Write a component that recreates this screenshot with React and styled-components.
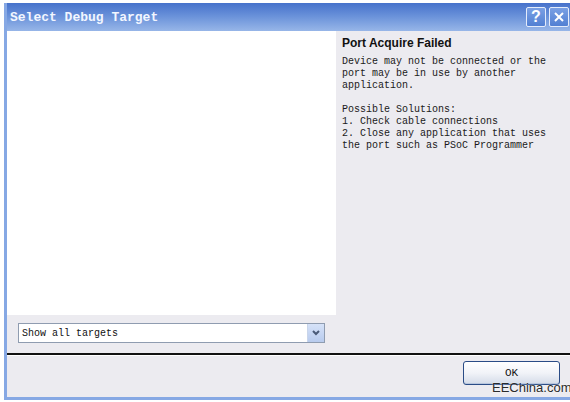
import styled, { createGlobalStyle } from "styled-components";

const Global = createGlobalStyle`
  html, body {
    margin: 0;
    background: #ffffff;
    overflow: hidden;
  }
`;

const Window = styled.div`
  position: relative;
  box-sizing: border-box;
  margin: 3px 0 0 4px;
  width: 566px;
  height: 397px;
  display: flex;
  flex-direction: column;
  border-left: 3px solid #86a8e4;
  border-bottom: 3px solid #86a8e4;
`;

const TitleBar = styled.div`
  height: 28px;
  flex-shrink: 0;
  display: flex;
  align-items: center;
  justify-content: space-between;
  padding: 0 1px 0 3px;
  background: linear-gradient(to bottom, #4672cb 0%, #6890d9 45%, #97b6e8 100%);
`;

const Title = styled.span`
  font-family: "Liberation Mono", "DejaVu Sans Mono", monospace;
  font-weight: bold;
  font-size: 13px;
  color: #f2f6ff;
`;

const Controls = styled.div`
  display: flex;
  gap: 3px;
`;

const CaptionButton = styled.div`
  box-sizing: border-box;
  width: 20px;
  height: 20px;
  border: 1px solid #e4ecfb;
  border-radius: 2px;
  background: linear-gradient(to bottom, #7aa0e4, #5280d3);
  display: flex;
  align-items: center;
  justify-content: center;
  color: #ffffff;
  font-family: "Liberation Sans", Arial, sans-serif;
  font-weight: bold;
  font-size: 16px;
`;

const Client = styled.div`
  flex: 1;
  display: flex;
  flex-direction: column;
  background: #ecebf0;
`;

const Main = styled.div`
  height: 322px;
  display: grid;
  grid-template-columns: 329px 1fr;
`;

const LeftPane = styled.div`
  display: flex;
  flex-direction: column;
`;

const TargetList = styled.div`
  height: 284px;
  background: #ffffff;
`;

const FilterRow = styled.div`
  padding: 8px 0 0 11px;
`;

const Select = styled.div`
  box-sizing: border-box;
  width: 307px;
  height: 20px;
  background: #ffffff;
  border: 1px solid #8f9cb0;
  display: flex;
  align-items: center;
  justify-content: space-between;
  padding-left: 3px;
  font-family: "Liberation Mono", "DejaVu Sans Mono", monospace;
  font-size: 10px;
  color: #111111;
`;

const SelectButton = styled.div`
  width: 16px;
  height: 18px;
  background: linear-gradient(to bottom, #d6e2f8, #b8cbee);
  border-left: 1px solid #c9d5ea;
  display: flex;
  align-items: center;
  justify-content: center;
`;

const InfoPane = styled.div`
  padding: 5px 0 0 6px;
`;

const InfoTitle = styled.div`
  font-family: "Liberation Sans", Arial, sans-serif;
  font-weight: bold;
  font-size: 12px;
  color: #111111;
  margin-bottom: 6px;
`;

const InfoText = styled.pre`
  margin: 0;
  font-family: "Liberation Mono", "DejaVu Sans Mono", monospace;
  font-size: 10px;
  line-height: 12px;
  color: #1a1a1a;
`;

const Divider = styled.div`
  height: 2px;
  background: #111111;
  border-bottom: 1px solid #ffffff;
`;

const Footer = styled.div`
  flex: 1;
  display: flex;
  justify-content: flex-end;
  align-items: flex-start;
  padding: 5px 10px 0 0;
`;

const OkButton = styled.div`
  box-sizing: border-box;
  width: 97px;
  height: 24px;
  border: 1px solid #2a4c86;
  border-radius: 3px;
  background: linear-gradient(to bottom, #ffffff 0%, #f1f3f8 50%, #d4dbe8 100%);
  box-shadow: inset 0 -1px 0 #b8c6de;
  display: flex;
  align-items: center;
  justify-content: center;
  font-family: "Liberation Mono", "DejaVu Sans Mono", monospace;
  font-size: 11px;
  color: #111111;
`;

const Watermark = styled.div`
  position: absolute;
  left: 485px;
  top: 377px;
  font-family: "Liberation Sans", Arial, sans-serif;
  font-size: 13px;
  color: #2b2b2b;
  text-shadow: 0 0 2px #ffffff;
`;

const info = `Device may not be connected or the
port may be in use by another
application.

Possible Solutions:
1. Check cable connections
2. Close any application that uses
the port such as PSoC Programmer`;

export default function App() {
  return (
    <>
      <Global />
      <Window>
        <TitleBar>
          <Title>Select Debug Target</Title>
          <Controls>
            <CaptionButton>?</CaptionButton>
            <CaptionButton>
              <svg width="12" height="12" viewBox="0 0 12 12">
                <path d="M2 2 L10 10 M10 2 L2 10" stroke="#ffffff" strokeWidth="2" />
              </svg>
            </CaptionButton>
          </Controls>
        </TitleBar>
        <Client>
          <Main>
            <LeftPane>
              <TargetList />
              <FilterRow>
                <Select>
                  Show all targets
                  <SelectButton>
                    <svg width="8" height="6" viewBox="0 0 8 6">
                      <path d="M1 1 L4 4 L7 1" fill="none" stroke="#4a5a78" strokeWidth="2" />
                    </svg>
                  </SelectButton>
                </Select>
              </FilterRow>
            </LeftPane>
            <InfoPane>
              <InfoTitle>Port Acquire Failed</InfoTitle>
              <InfoText>{info}</InfoText>
            </InfoPane>
          </Main>
          <Divider />
          <Footer>
            <OkButton>OK</OkButton>
          </Footer>
        </Client>
        <Watermark>EEChina.com</Watermark>
      </Window>
    </>
  );
}
